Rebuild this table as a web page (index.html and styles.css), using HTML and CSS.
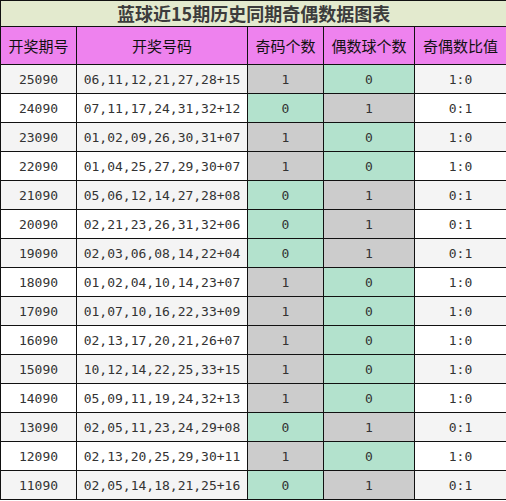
FILE: index.html
```html
<!DOCTYPE html>
<html lang="zh-CN">
<head>
  <meta charset="UTF-8" />
  <title>蓝球近15期历史同期奇偶数据图表</title>
  <link rel="stylesheet" href="styles.css">
</head>
<body>
  <table class="chart">
    <colgroup>
      <col class="c-issue">
      <col class="c-nums">
      <col class="c-odd">
      <col class="c-even">
      <col class="c-ratio">
    </colgroup>
    <tr class="title-row">
      <td colspan="5">蓝球近15期历史同期奇偶数据图表</td>
    </tr>
    <tr class="head-row">
      <td>开奖期号</td>
      <td>开奖号码</td>
      <td>奇码个数</td>
      <td>偶数球个数</td>
      <td>奇偶数比值</td>
    </tr>
  </table>

<script>
  const rows = [
    ["25090", "06,11,12,21,27,28+15", 1, 0],
    ["24090", "07,11,17,24,31,32+12", 0, 1],
    ["23090", "01,02,09,26,30,31+07", 1, 0],
    ["22090", "01,04,25,27,29,30+07", 1, 0],
    ["21090", "05,06,12,14,27,28+08", 0, 1],
    ["20090", "02,21,23,26,31,32+06", 0, 1],
    ["19090", "02,03,06,08,14,22+04", 0, 1],
    ["18090", "01,02,04,10,14,23+07", 1, 0],
    ["17090", "01,07,10,16,22,33+09", 1, 0],
    ["16090", "02,13,17,20,21,26+07", 1, 0],
    ["15090", "10,12,14,22,25,33+15", 1, 0],
    ["14090", "05,09,11,19,24,32+13", 1, 0],
    ["13090", "02,05,11,23,24,29+08", 0, 1],
    ["12090", "02,13,20,25,29,30+11", 1, 0],
    ["11090", "02,05,14,18,21,25+16", 0, 1]
  ];

  const table = document.querySelector(".chart");

  rows.forEach(r => {
    const tr = document.createElement("tr");
    tr.className = "data-row";
    // 1 -> gray cell, 0 -> green cell
    const cls = v => (v === 1 ? "hit" : "miss");
    tr.innerHTML =
      "<td>" + r[0] + "</td>" +
      "<td>" + r[1] + "</td>" +
      '<td class="' + cls(r[2]) + '">' + r[2] + "</td>" +
      '<td class="' + cls(r[3]) + '">' + r[3] + "</td>" +
      "<td>" + r[2] + ":" + r[3] + "</td>";
    table.appendChild(tr);
  });
</script>
</body>
</html>
```

FILE: styles.css
```css
body {
  margin: 0;
  background: #fff;
}
.chart {
  width: 506px;
  border-collapse: collapse;
  table-layout: fixed;
}
.chart td {
  border: 1px solid #111;
  padding: 0;
  text-align: center;
}
.c-issue { width: 76px; }
.c-nums { width: 171px; }
.c-odd { width: 76px; }
.c-even { width: 91px; }
.c-ratio { width: 92px; }

.title-row td {
  height: 25px;
  background: #e3eace;
  color: #3c3c3c;
  font-family: "Noto Sans CJK SC", sans-serif;
  font-weight: bold;
  font-size: 18px;
  line-height: 25px;
}
.head-row td {
  height: 37px;
  background: #ee82ee;
  color: #111;
  font-family: "Noto Sans CJK SC", sans-serif;
  font-size: 15px;
}
.data-row td {
  height: 28px;
  font-family: "DejaVu Sans Mono", monospace;
  font-size: 13px;
  color: #333;
}
.data-row:nth-child(odd) td {
  background: #f4f4f4;
}
.data-row:nth-child(even) td {
  background: #fff;
}
.data-row td.hit {
  background: #cccccc;
}
.data-row td.miss {
  background: #b3e2cd;
}
```
